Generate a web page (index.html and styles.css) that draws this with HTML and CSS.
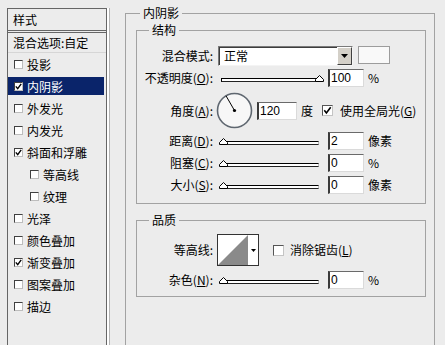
FILE: index.html
```html
<!DOCTYPE html>
<html lang="zh-CN">
<head>
<meta charset="utf-8">
<title>图层样式</title>
<link rel="stylesheet" href="styles.css">
</head>
<body>
<div class="dialog">
  <div class="styles-list">
    <div class="list-head">样式</div>
    <div class="list-blend">混合选项:自定</div>
    <div class="list-row"><span class="item"><span class="cb"></span>投影</span></div>
    <div class="list-row selected"><span class="item"><span class="cb"><svg width="7" height="7" viewBox="0 0 7 7"><polyline points="0.8,3.4 2.7,5.6 6.2,0.8" fill="none" stroke="#000" stroke-width="1.4"/></svg></span>内阴影</span></div>
    <div class="list-row"><span class="item"><span class="cb"></span>外发光</span></div>
    <div class="list-row"><span class="item"><span class="cb"></span>内发光</span></div>
    <div class="list-row"><span class="item"><span class="cb"><svg width="7" height="7" viewBox="0 0 7 7"><polyline points="0.8,3.4 2.7,5.6 6.2,0.8" fill="none" stroke="#000" stroke-width="1.4"/></svg></span>斜面和浮雕</span></div>
    <div class="list-row sub"><span class="item"><span class="cb"></span>等高线</span></div>
    <div class="list-row sub"><span class="item"><span class="cb"></span>纹理</span></div>
    <div class="list-row"><span class="item"><span class="cb"></span>光泽</span></div>
    <div class="list-row"><span class="item"><span class="cb"></span>颜色叠加</span></div>
    <div class="list-row"><span class="item"><span class="cb"><svg width="7" height="7" viewBox="0 0 7 7"><polyline points="0.8,3.4 2.7,5.6 6.2,0.8" fill="none" stroke="#000" stroke-width="1.4"/></svg></span>渐变叠加</span></div>
    <div class="list-row"><span class="item"><span class="cb"></span>图案叠加</span></div>
    <div class="list-row"><span class="item"><span class="cb"></span>描边</span></div>
  </div>

  <div class="settings">
    <fieldset class="group outer">
      <legend>内阴影</legend>

      <fieldset class="group inner">
        <legend>结构</legend>

        <div class="row mode-row">
          <span class="lbl">混合模式:</span>
          <div class="select">
            <span class="select-text">正常</span>
            <span class="select-btn"><svg width="7" height="4" viewBox="0 0 7 4"><polygon points="0,0 7,0 3.5,4" fill="#000"/></svg></span>
          </div>
          <span class="swatch"></span>
        </div>

        <div class="row">
          <span class="lbl">不透明度(<u>O</u>):</span>
          <div class="slider"><span class="track"></span><svg class="thumb thumb-max" width="9" height="7" viewBox="0 0 9 7"><polygon points="0.5,6.5 0.5,4.5 4.5,0.5 8.5,4.5 8.5,6.5" fill="#fff" stroke="#000"/></svg></div>
          <span class="field">100</span>
          <span class="unit">%</span>
        </div>

        <div class="row angle-row">
          <span class="lbl">角度(<u>A</u>):</span>
          <svg class="dial" width="37" height="37" viewBox="0 0 37 37">
            <circle cx="18.5" cy="18.5" r="17" fill="#f7f7f7" stroke="#5f6770" stroke-width="1.6"/>
            <line x1="18.5" y1="18.5" x2="10" y2="3.8" stroke="#000" stroke-width="1"/>
            <circle cx="18.5" cy="18.5" r="1.6" fill="#000"/>
          </svg>
          <span class="field wide">120</span>
          <span class="unit">度</span>
          <span class="cb cb-lg"><svg width="9" height="9" viewBox="0 0 9 9"><polyline points="1.3,4.3 3.4,7 7.7,1.3" fill="none" stroke="#000" stroke-width="1.6"/></svg></span>
          <span class="cb-label">使用全局光(<u>G</u>)</span>
        </div>

        <div class="row">
          <span class="lbl">距离(<u>D</u>):</span>
          <div class="slider"><span class="track"></span><svg class="thumb thumb-min" width="9" height="7" viewBox="0 0 9 7"><polygon points="0.5,6.5 0.5,4.5 4.5,0.5 8.5,4.5 8.5,6.5" fill="#fff" stroke="#000"/></svg></div>
          <span class="field">2</span>
          <span class="unit">像素</span>
        </div>

        <div class="row">
          <span class="lbl">阻塞(<u>C</u>):</span>
          <div class="slider"><span class="track"></span><svg class="thumb thumb-min" width="9" height="7" viewBox="0 0 9 7"><polygon points="0.5,6.5 0.5,4.5 4.5,0.5 8.5,4.5 8.5,6.5" fill="#fff" stroke="#000"/></svg></div>
          <span class="field">0</span>
          <span class="unit">%</span>
        </div>

        <div class="row">
          <span class="lbl">大小(<u>S</u>):</span>
          <div class="slider"><span class="track"></span><svg class="thumb thumb-min" width="9" height="7" viewBox="0 0 9 7"><polygon points="0.5,6.5 0.5,4.5 4.5,0.5 8.5,4.5 8.5,6.5" fill="#fff" stroke="#000"/></svg></div>
          <span class="field">0</span>
          <span class="unit">像素</span>
        </div>
      </fieldset>

      <fieldset class="group inner quality">
        <legend>品质</legend>

        <div class="row contour-row">
          <span class="lbl">等高线:</span>
          <div class="contour">
            <svg class="contour-swatch" width="30" height="30" viewBox="0 0 30 30"><rect width="30" height="30" fill="#fff"/><polygon points="0,30 30,0 30,30" fill="#8a8a8a"/></svg>
            <span class="contour-btn"><svg width="5" height="3" viewBox="0 0 5 3"><polygon points="0,0 5,0 2.5,3" fill="#000"/></svg></span>
          </div>
          <span class="cb cb-lg cb-aa"></span>
          <span class="cb-label aa-label">消除锯齿(<u>L</u>)</span>
        </div>

        <div class="row noise-row">
          <span class="lbl">杂色(<u>N</u>):</span>
          <div class="slider"><span class="track"></span><svg class="thumb thumb-min" width="9" height="7" viewBox="0 0 9 7"><polygon points="0.5,6.5 0.5,4.5 4.5,0.5 8.5,4.5 8.5,6.5" fill="#fff" stroke="#000"/></svg></div>
          <span class="field">0</span>
          <span class="unit">%</span>
        </div>
      </fieldset>
    </fieldset>
  </div>
</div>
</body>
</html>
```
FILE: styles.css
```css
html, body {
  margin: 0;
  height: 345px;
  overflow: hidden;
}
body {
  background: #ececec;
  font-family: "Noto Sans CJK SC", "Noto Sans", sans-serif;
  font-size: 12px;
  color: #000;
}
.dialog {
  display: flex;
  align-items: flex-start;
  height: 345px;
  overflow: hidden;
}

/* ---------- left list ---------- */
.styles-list {
  flex: none;
  margin: 8px 0 0 7px;
  width: 100px;
  height: 337px;
  box-sizing: border-box;
  border: 1px solid #666;
  border-bottom: 0;
  box-shadow: 1px 0 0 #fff, 2px 0 0 #fff, 3px 0 0 #b4b4b4;
}
.list-head {
  height: 21px;
  line-height: 21px;
  padding-left: 5px;
  border-bottom: 1px solid #666;
}
.list-blend {
  margin-top: 1px;
  height: 19px;
  line-height: 19px;
  padding-left: 5px;
  border-top: 1px solid #666;
  border-bottom: 1px solid #d6d6d6;
}
.list-row {
  height: 22px;
  display: flex;
  align-items: center;
}
.item {
  flex: 1;
  margin-right: 2px;
  height: 18px;
  display: flex;
  align-items: center;
  padding-left: 6px;
  white-space: nowrap;
}
.list-row.sub .item {
  padding-left: 22px;
}
.list-row.selected .item {
  background: #0a246a;
  color: #fff;
}
.cb {
  flex: none;
  width: 9px;
  height: 9px;
  box-sizing: border-box;
  border: 1px solid;
  border-color: #404040 #bdbdbd #bdbdbd #404040;
  background: #fff;
  margin-right: 4px;
  display: flex;
  align-items: center;
  justify-content: center;
}
.cb svg {
  display: block;
}

/* ---------- right settings ---------- */
.settings {
  flex: none;
  margin-left: 18px;
}
fieldset.group {
  margin: 0;
  min-inline-size: 0;
  box-sizing: border-box;
  border: 1px solid #a2a2a2;
}
fieldset.group legend {
  padding: 0 3px;
  height: 16px;
  line-height: 16px;
  font-size: 12px;
}
fieldset.outer {
  width: 310px;
  height: 340px;
  margin-top: 5px;
  padding: 0 8px 0 10px;
  border-bottom: 0;
}
fieldset.outer > legend {
  margin-left: 4px;
}
fieldset.inner {
  width: 290px;
  margin-top: 1px;
  padding: 0 0 8px 0;
}
fieldset.inner > legend {
  margin-left: 12px;
}
fieldset.quality {
  margin-top: 8px;
  padding-bottom: 6px;
}

.row {
  display: flex;
  align-items: center;
  height: 20px;
  margin-top: 2px;
  white-space: nowrap;
}
.lbl {
  flex: none;
  width: 76px;
  text-align: right;
  line-height: 16px;
}
.mode-row {
  margin-top: 8px;
}
.angle-row {
  height: 37px;
  margin-top: 4px;
}
.contour-row {
  height: 32px;
  margin-top: 6px;
}
.noise-row {
  margin-top: 4px;
}

/* select */
.select {
  flex: none;
  margin-left: 5px;
  width: 135px;
  height: 20px;
  box-sizing: border-box;
  border: 1px solid;
  border-color: #7a7a7a #f4f4f4 #f4f4f4 #7a7a7a;
  box-shadow: inset 1px 1px 0 #3c3c3c;
  background: #fff;
  display: flex;
  align-items: stretch;
}
.select-text {
  flex: 1;
  padding-left: 5px;
  line-height: 18px;
}
.select-btn {
  flex: none;
  width: 15px;
  box-sizing: border-box;
  border: 1px solid;
  border-color: #fff #404040 #404040 #fff;
  background: #d4d0c8;
  display: flex;
  align-items: center;
  justify-content: center;
}
.select-btn svg {
  display: block;
}
.swatch {
  flex: none;
  align-self: flex-start;
  margin-left: 5px;
  width: 32px;
  height: 18px;
  box-sizing: border-box;
  border: 1px solid #9c9c9c;
  background: #f9f9f9;
}

/* slider */
.slider {
  flex: none;
  position: relative;
  margin-left: 5px;
  width: 105px;
  height: 20px;
}
.track {
  position: absolute;
  left: 3px;
  right: 4px;
  top: 10px;
  height: 4px;
  box-sizing: border-box;
  border-top: 1px solid #000;
  border-bottom: 1px solid #222;
  border-left: 1px solid #000;
  border-right: 1px solid #bbb;
  background: #fff;
}
.thumb {
  position: absolute;
  top: 7px;
  display: block;
}
.thumb-min {
  left: 1px;
}
.thumb-max {
  left: 97px;
}

/* fields */
.field {
  flex: none;
  margin-left: 5px;
  width: 36px;
  height: 18px;
  box-sizing: border-box;
  border-style: solid;
  border-width: 1px 1px 1px 2px;
  border-color: #6a6a6a #dadada #dadada #3a3a3a;
  background: #fff;
  font-family: "Liberation Sans", Arial, sans-serif;
  font-size: 12px;
  line-height: 16px;
  padding-left: 1px;
}
.field.wide {
  margin-left: 4px;
  width: 40px;
}
.unit {
  flex: none;
  margin-left: 4px;
  line-height: 16px;
}

/* dial */
.dial {
  flex: none;
  margin-left: 3px;
  display: block;
}

/* big checkboxes */
.cb-lg {
  width: 11px;
  height: 11px;
  margin-right: 0;
  margin-left: 9px;
  border-color: #555 #c4c4c4 #c4c4c4 #555;
}
.cb-label {
  margin-left: 7px;
  line-height: 16px;
}
.cb-aa {
  margin-left: 14px;
}
.aa-label {
  margin-left: 6px;
}

/* contour picker */
.contour {
  flex: none;
  margin-left: 4px;
  width: 42px;
  height: 32px;
  box-sizing: border-box;
  border: 1px solid #333;
  display: flex;
  background: #fff;
}
.contour-swatch {
  display: block;
  flex: none;
}
.contour-btn {
  flex: 1;
  display: flex;
  align-items: center;
  justify-content: center;
}
.contour-btn svg {
  display: block;
}
```
